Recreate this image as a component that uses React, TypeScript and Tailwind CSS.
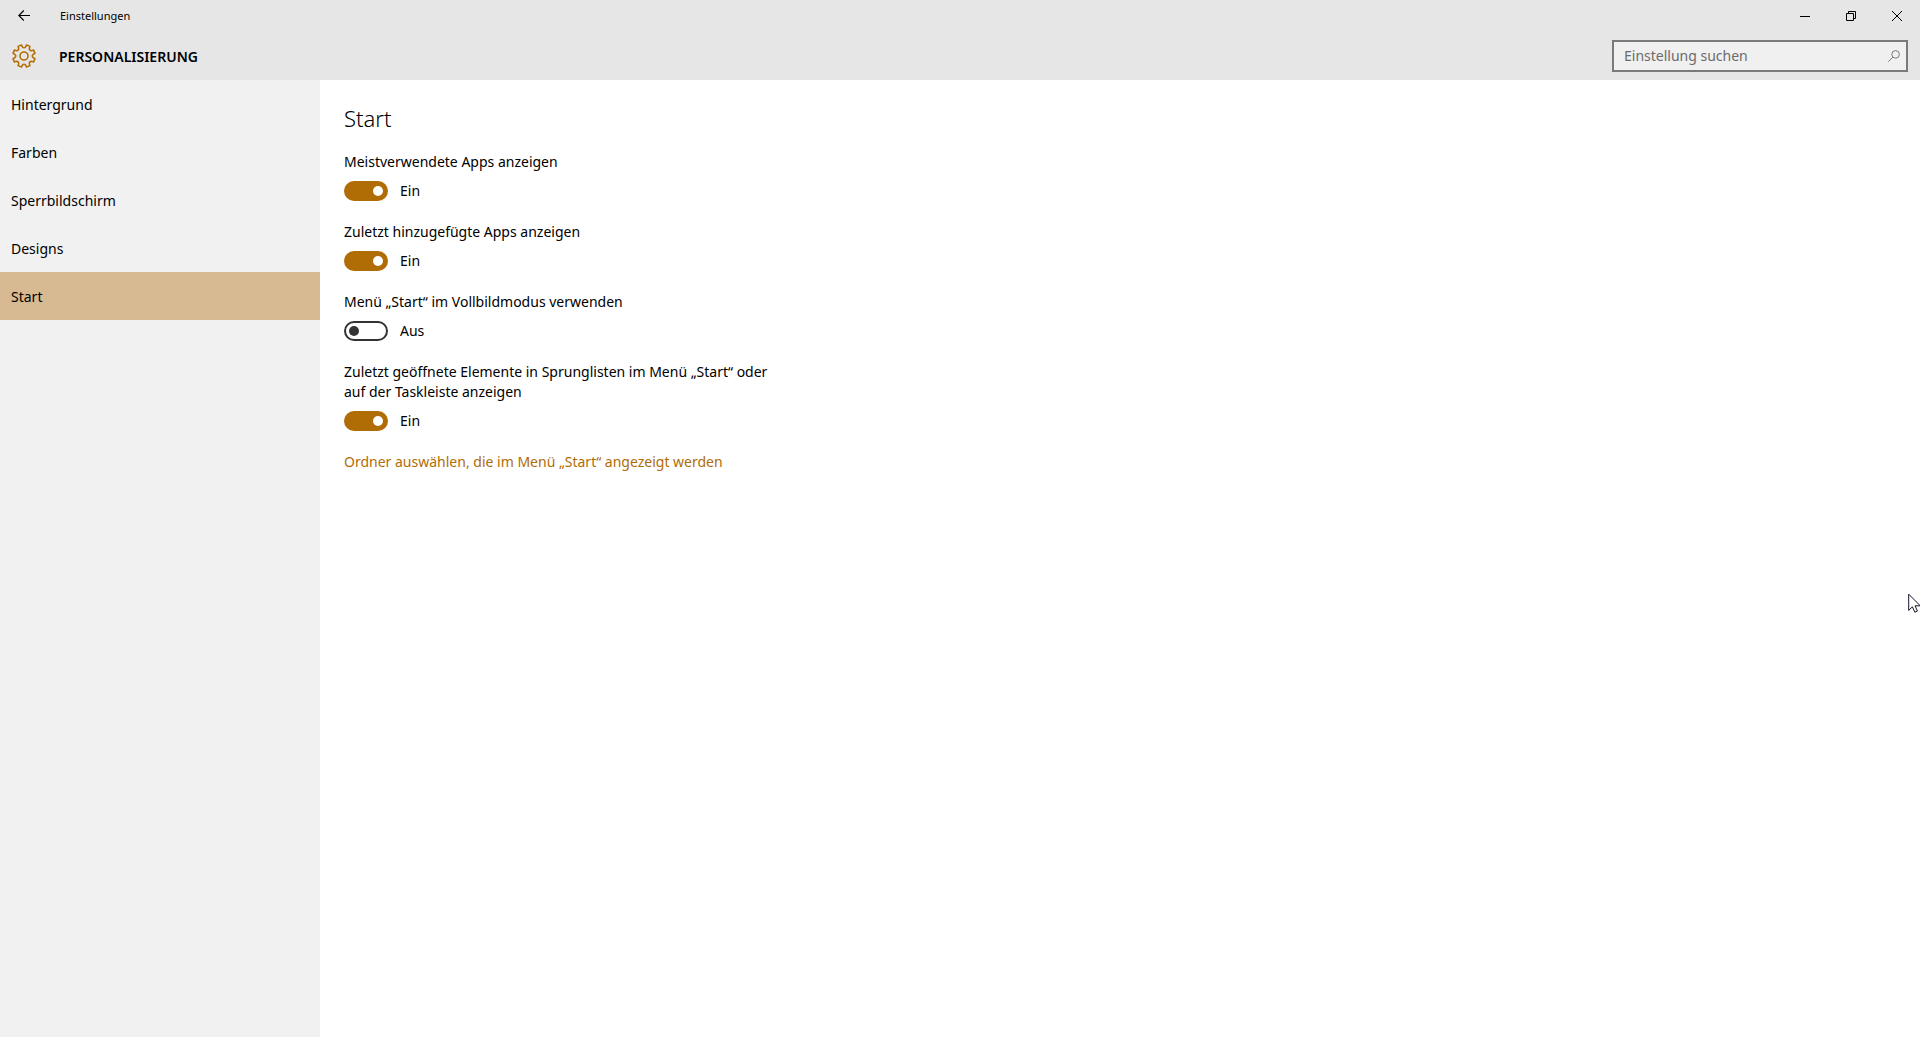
import { useState, type ReactNode } from "react";

const NAV = ["Hintergrund", "Farben", "Sperrbildschirm", "Designs", "Start"];

const OPTIONS = [
  { id: "most-used", label: "Meistverwendete Apps anzeigen", on: true },
  { id: "recent-apps", label: "Zuletzt hinzugefügte Apps anzeigen", on: true },
  { id: "full-screen", label: "Menü „Start“ im Vollbildmodus verwenden", on: false },
  {
    id: "jump-lists",
    label: "Zuletzt geöffnete Elemente in Sprunglisten im Menü „Start“ oder auf der Taskleiste anzeigen",
    on: true,
  },
];

function gearPath() {
  const point = (deg: number, r: number) => {
    const a = (deg * Math.PI) / 180;
    return `${(12 + r * Math.sin(a)).toFixed(2)} ${(12 - r * Math.cos(a)).toFixed(2)}`;
  };
  let d = "";
  for (let i = 0; i < 8; i++) {
    const a = 22.5 + i * 45;
    d += `${i === 0 ? "M" : "L"}${point(a - 9, 11.3)}L${point(a + 9, 11.3)}`;
    d += `L${point(a + 13, 9.2)}Q${point(a + 22.5, 7.4)} ${point(a + 32, 9.2)}`;
  }
  return d + "Z";
}

function GearIcon() {
  return (
    <svg className="size-6" viewBox="0 0 24 24" fill="none" stroke="#b46f06" strokeWidth="1.6" strokeLinejoin="round" aria-hidden="true">
      <path d={gearPath()} />
      <circle cx="12" cy="12" r="4" />
    </svg>
  );
}

function CaptionButton({ label, children }: { label: string; children: ReactNode }) {
  return (
    <button type="button" aria-label={label} className="flex h-8 w-[46px] items-center justify-center hover:bg-[#d0d0d0]">
      <svg className="size-3" viewBox="0 0 12 12" fill="none" stroke="black" aria-hidden="true">
        {children}
      </svg>
    </button>
  );
}

function Toggle({ id, label, initial }: { id: string; label: string; initial: boolean }) {
  const [on, setOn] = useState(initial);
  return (
    <div className="mb-5">
      <label htmlFor={id} className="block max-w-[440px]">
        {label}
      </label>
      <div className="mt-2 flex h-[22px] items-center gap-3">
        <span className="relative flex">
          <input
            id={id}
            type="checkbox"
            role="switch"
            checked={on}
            onChange={(e) => setOn(e.target.checked)}
            className="peer h-5 w-11 appearance-none rounded-full border-2 border-[#333333] bg-white checked:border-[#b06c05] checked:bg-[#b06c05]"
          />
          <span className="pointer-events-none absolute top-[5px] left-[5px] size-2.5 rounded-full bg-[#333333] peer-checked:left-[29px] peer-checked:bg-white" />
        </span>
        <span>{on ? "Ein" : "Aus"}</span>
      </div>
    </div>
  );
}

export default function App() {
  return (
    <div className="relative flex min-h-screen flex-col overflow-hidden bg-white font-['Noto_Sans',sans-serif] text-sm leading-5 text-black">
      <header className="bg-[#e6e6e6]">
        <div className="flex h-8 items-center">
          <button type="button" aria-label="Zurück" className="flex h-8 w-12 items-center justify-center">
            <svg className="h-3 w-3" viewBox="0 0 12 12" fill="none" stroke="black" strokeWidth="1.1" aria-hidden="true">
              <path d="M12 5.5H.8M5.8 .5L.8 5.5L5.8 10.5" />
            </svg>
          </button>
          <span className="ml-3 flex-1 text-[11px]">Einstellungen</span>
          <CaptionButton label="Minimieren">
            <path d="M1 6.5H11" />
          </CaptionButton>
          <CaptionButton label="Verkleinern">
            <path d="M1.5 3.5H8.5V10.5H1.5ZM3.5 3.5V1.5H10.5V8.5H8.5" />
          </CaptionButton>
          <CaptionButton label="Schließen">
            <path d="M1 1L11 11M11 1L1 11" />
          </CaptionButton>
        </div>
        <div className="flex h-12 items-center pr-3">
          <span className="flex w-12 justify-center">
            <GearIcon />
          </span>
          <span className="ml-[11px] flex-1 pt-0.5 font-semibold">PERSONALISIERUNG</span>
          <label className="flex h-8 w-74 items-center border-2 border-[#7a7a7a] bg-[#f0f0f0] pr-1.5 pl-2.5">
            <input
              type="text"
              aria-label="Einstellung suchen"
              placeholder="Einstellung suchen"
              className="min-w-0 flex-1 bg-transparent outline-none placeholder:text-[#6b6b6b]"
            />
            <svg className="size-3" viewBox="0 0 12 12" fill="none" stroke="#7a7a7a" strokeWidth="1" aria-hidden="true">
              <circle cx="7.6" cy="4.4" r="3.8" />
              <path d="M4.9 7.1L.3 11.7" />
            </svg>
          </label>
        </div>
      </header>

      <div className="flex flex-1">
        <nav className="w-80 shrink-0 bg-[#f1f1f1]">
          {NAV.map((item) => (
            <a
              key={item}
              href="#"
              aria-current={item === "Start" ? "page" : undefined}
              className="flex h-12 items-center px-[11px] pt-0.5 aria-[current=page]:bg-[#d7ba92]"
            >
              {item}
            </a>
          ))}
        </nav>
        <main className="flex-1 px-6 pt-[22px]">
          <h1 className="mb-[18px] text-[22px] leading-8 font-[350]">Start</h1>
          {OPTIONS.map((o) => (
            <Toggle key={o.id} id={o.id} label={o.label} initial={o.on} />
          ))}
          <a href="#" className="text-[#b06c05]">
            Ordner auswählen, die im Menü „Start“ angezeigt werden
          </a>
        </main>
      </div>

      <svg className="pointer-events-none absolute top-[593px] -right-1 h-5 w-4" viewBox="0 0 16 20" fill="white" stroke="#14142a" strokeWidth="1" aria-hidden="true">
        <path d="M.7 1.2V17.4L4.4 13.8L6.8 19.2L9.4 18L7.1 12.8H12.3Z" />
      </svg>
    </div>
  );
}
